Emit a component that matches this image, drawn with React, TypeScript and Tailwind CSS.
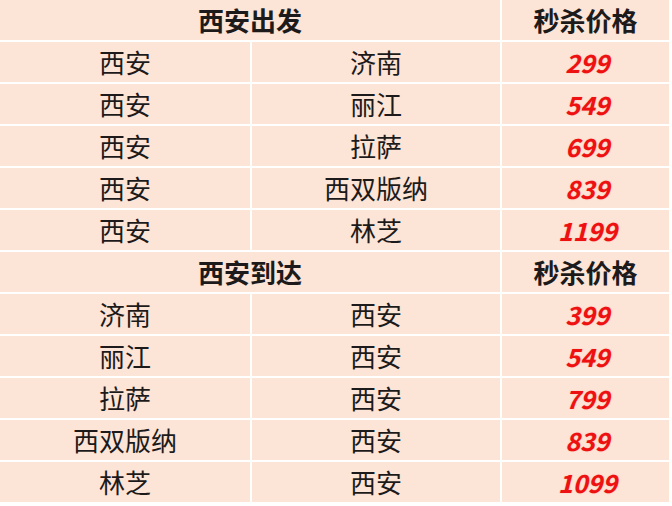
import { Fragment } from 'react';

const sections = [
  {
    title: '西安出发',
    rows: [
      ['西安', '济南', '299'],
      ['西安', '丽江', '549'],
      ['西安', '拉萨', '699'],
      ['西安', '西双版纳', '839'],
      ['西安', '林芝', '1199'],
    ],
  },
  {
    title: '西安到达',
    rows: [
      ['济南', '西安', '399'],
      ['丽江', '西安', '549'],
      ['拉萨', '西安', '799'],
      ['西双版纳', '西安', '839'],
      ['林芝', '西安', '1099'],
    ],
  },
];

const cell = 'bg-[#fce4d6] flex items-center justify-center';

export default function App() {
  return (
    <div className="w-[672px] h-[506px] bg-white" style={{ fontFamily: '"Noto Sans CJK SC", "Noto Sans", sans-serif' }}>
      <div className="grid grid-cols-[250px_248px_167px] auto-rows-[40px] gap-[2px] w-[669px] text-[26px] text-[#1c1a1a] leading-none">
        {sections.map((s) => (
          <Fragment key={s.title}>
            <div className={`${cell} col-span-2 font-bold`}>{s.title}</div>
            <div className={`${cell} font-bold`}>秒杀价格</div>
            {s.rows.map((r, i) => (
              <Fragment key={i}>
                <div className={cell}>{r[0]}</div>
                <div className={cell}>{r[1]}</div>
                <div className={`${cell} pl-1`}>
                  <span className="text-[25px] font-bold italic text-[#ee1111] [text-shadow:0_0_1px_rgba(255,80,80,0.6)]">{r[2]}</span>
                </div>
              </Fragment>
            ))}
          </Fragment>
        ))}
      </div>
    </div>
  );
}
